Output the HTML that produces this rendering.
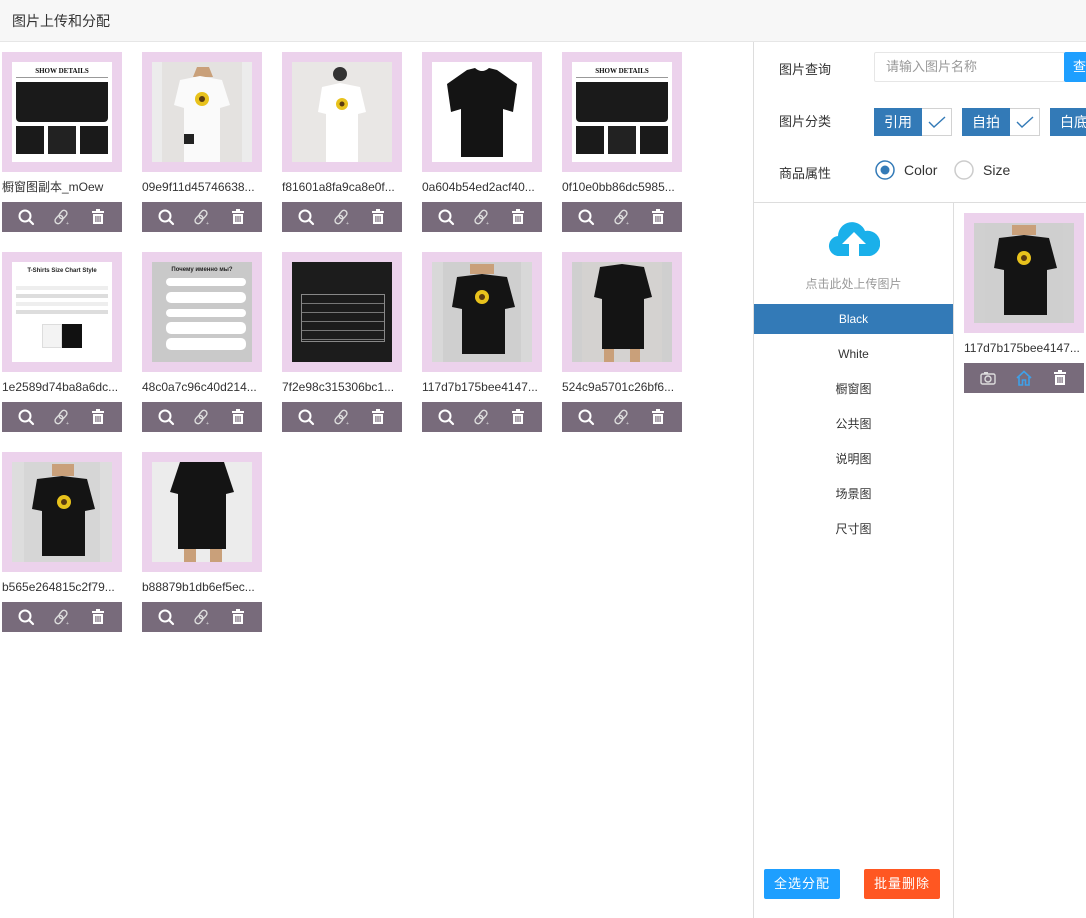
<!DOCTYPE html>
<html><head><meta charset="utf-8"><style>
*{margin:0;padding:0;box-sizing:border-box}
body{width:1086px;height:918px;background:#fff;font-family:"Liberation Sans","Noto Sans CJK SC",sans-serif;position:relative;overflow:hidden;color:#333}
.hdr{position:absolute;left:0;top:0;width:1086px;height:42px;background:#f7f7f7;border-bottom:1px solid #e6e6e6;font-size:14px;line-height:42px;padding-left:12px;color:#333}
.card{position:absolute;width:120px}
.frame{width:120px;height:120px;background:#ecd2ec;padding:10px}
.img{width:100px;height:100px;overflow:hidden;position:relative;background:#fff}
.cap{font-size:12px;color:#333;height:30px;line-height:30px;white-space:nowrap;overflow:hidden;text-overflow:ellipsis;padding-left:0}
.bar{height:30px;background:#786b7b;display:flex;justify-content:space-around;align-items:center;padding:0 6px}
.bar svg{width:18px;height:18px}
.vl{position:absolute;left:753px;top:42px;width:1px;height:876px;background:#ddd}
.lbl{position:absolute;left:779px;font-size:13px;color:#333}
.inp{position:absolute;left:874px;top:52px;width:191px;height:30px;border:1px solid #e6e6e6;border-radius:2px;font-size:13px;color:#999;line-height:28px;padding-left:11px}
.qbtn{position:absolute;left:1064px;top:52px;width:30px;height:30px;background:#1e9fff;color:#fff;font-size:13px;line-height:30px;padding-left:9px;border-radius:2px}
.cat{position:absolute;top:108px;height:28px;display:flex}
.cat .t{background:#337ab7;color:#fff;font-size:14px;line-height:28px;width:48px;text-align:center}
.cat .c{width:30px;border:1px solid #d2d2d2;border-left:none;display:flex;align-items:center;justify-content:center}
.hl{position:absolute;left:754px;top:202px;width:332px;height:1px;background:#ddd}
.vl2{position:absolute;left:953px;top:203px;width:1px;height:715px;background:#ddd}
.li{position:absolute;left:754px;width:199px;height:30px;line-height:30px;text-align:center;font-size:12px;color:#333}
.btn{position:absolute;top:869px;width:76px;height:30px;color:#fff;font-size:13px;line-height:30px;text-align:center;border-radius:2px;letter-spacing:1px}
</style></head><body>
<div class="hdr">图片上传和分配</div>

<svg width="0" height="0" style="position:absolute">
<defs>
<g id="srch"><circle cx="8" cy="8" r="5.5" fill="none" stroke="#fff" stroke-width="2"/><line x1="12" y1="12" x2="16" y2="16" stroke="#fff" stroke-width="2.2" stroke-linecap="round"/></g>
<g id="lnk" fill="none" stroke="#ddd" stroke-width="1.4"><rect x="7" y="2" width="6" height="9" rx="3" transform="rotate(40 10 6.5)"/><rect x="3" y="7" width="6" height="9" rx="3" transform="rotate(40 6 11.5)"/><text x="13" y="17" font-size="5" fill="#ddd" stroke="none">+</text></g>
<g id="del" fill="#fff"><rect x="3" y="3" width="12" height="2"/><rect x="7" y="1" width="4" height="2"/><path d="M4 6h10v10H4z"/><rect x="6.3" y="8" width="1.2" height="6" fill="#786b7b"/><rect x="8.4" y="8" width="1.2" height="6" fill="#786b7b"/><rect x="10.5" y="8" width="1.2" height="6" fill="#786b7b"/></g>
</defs></svg>

<!-- images templates inline -->
<div class="card" style="left:2px;top:52px"><div class="frame"><div class="img"><div style="font:bold 7px 'Liberation Serif',serif;text-align:center;margin-top:5px;color:#111">SHOW DETAILS</div><div style="position:absolute;left:4px;top:15px;width:92px;height:1px;background:#999"></div><div style="position:absolute;left:4px;top:20px;width:92px;height:40px;background:#1a1a1a;border-radius:0 0 4px 4px"></div><div style="position:absolute;left:4px;top:64px;width:28px;height:28px;background:#1a1a1a"></div><div style="position:absolute;left:36px;top:64px;width:28px;height:28px;background:#222"></div><div style="position:absolute;left:68px;top:64px;width:28px;height:28px;background:#1a1a1a"></div></div></div><div class="cap">橱窗图副本_mOew</div><div class="bar"><svg viewBox="0 0 18 18"><use href="#srch"/></svg><svg viewBox="0 0 18 18"><use href="#lnk"/></svg><svg viewBox="0 0 18 18"><use href="#del"/></svg></div></div>

<div class="card" style="left:142px;top:52px"><div class="frame"><div class="img" style="background:#ececec"><svg width="100" height="100"><rect x="10" y="0" width="80" height="100" fill="#e4e2e0"/><path d="M45 5h12l4 10h-20z" fill="#c9a07a"/><path d="M28 18l20-4 22 4 8 25-10 3v54H32V46l-10-3z" fill="#fafafa"/><circle cx="50" cy="37" r="7" fill="#e8c21c"/><circle cx="50" cy="37" r="3" fill="#5a3a10"/><rect x="32" y="72" width="10" height="10" fill="#222"/></svg></div></div><div class="cap">09e9f11d45746638...</div><div class="bar"><svg viewBox="0 0 18 18"><use href="#srch"/></svg><svg viewBox="0 0 18 18"><use href="#lnk"/></svg><svg viewBox="0 0 18 18"><use href="#del"/></svg></div></div>

<div class="card" style="left:282px;top:52px"><div class="frame"><div class="img" style="background:#eee"><svg width="100" height="100"><rect x="0" y="0" width="100" height="100" fill="#e9e7e5"/><circle cx="48" cy="12" r="7" fill="#333"/><path d="M30 25l18-4 20 4 6 25-8 2v48H34V52l-8-2z" fill="#fff"/><circle cx="50" cy="42" r="6" fill="#e8c21c"/><circle cx="50" cy="42" r="2.5" fill="#5a3a10"/></svg></div></div><div class="cap">f81601a8fa9ca8e0f...</div><div class="bar"><svg viewBox="0 0 18 18"><use href="#srch"/></svg><svg viewBox="0 0 18 18"><use href="#lnk"/></svg><svg viewBox="0 0 18 18"><use href="#del"/></svg></div></div>

<div class="card" style="left:422px;top:52px"><div class="frame"><div class="img"><svg width="100" height="100"><path d="M35 8l8-2q7 6 14 0l8 2 20 14-4 28-10-3v48H29V47l-10 3-4-28z" fill="#141414"/></svg></div></div><div class="cap">0a604b54ed2acf40...</div><div class="bar"><svg viewBox="0 0 18 18"><use href="#srch"/></svg><svg viewBox="0 0 18 18"><use href="#lnk"/></svg><svg viewBox="0 0 18 18"><use href="#del"/></svg></div></div>

<div class="card" style="left:562px;top:52px"><div class="frame"><div class="img"><div style="font:bold 7px 'Liberation Serif',serif;text-align:center;margin-top:5px;color:#111">SHOW DETAILS</div><div style="position:absolute;left:4px;top:15px;width:92px;height:1px;background:#999"></div><div style="position:absolute;left:4px;top:20px;width:92px;height:40px;background:#1a1a1a;border-radius:0 0 4px 4px"></div><div style="position:absolute;left:4px;top:64px;width:28px;height:28px;background:#1a1a1a"></div><div style="position:absolute;left:36px;top:64px;width:28px;height:28px;background:#222"></div><div style="position:absolute;left:68px;top:64px;width:28px;height:28px;background:#1a1a1a"></div></div></div><div class="cap">0f10e0bb86dc5985...</div><div class="bar"><svg viewBox="0 0 18 18"><use href="#srch"/></svg><svg viewBox="0 0 18 18"><use href="#lnk"/></svg><svg viewBox="0 0 18 18"><use href="#del"/></svg></div></div>

<!-- row 2 -->
<div class="card" style="left:2px;top:252px"><div class="frame"><div class="img"><div style="font:bold 6px sans-serif;text-align:center;margin-top:6px;color:#222">T-Shirts Size Chart Style</div><div style="position:absolute;left:4px;top:24px;width:92px;height:4px;background:#eee"></div><div style="position:absolute;left:4px;top:32px;width:92px;height:4px;background:#ddd"></div><div style="position:absolute;left:4px;top:40px;width:92px;height:4px;background:#eee"></div><div style="position:absolute;left:4px;top:48px;width:92px;height:4px;background:#ddd"></div><div style="position:absolute;left:30px;top:62px;width:20px;height:24px;background:#f3f3f3;border:1px solid #ddd"></div><div style="position:absolute;left:50px;top:62px;width:20px;height:24px;background:#111"></div></div></div><div class="cap">1e2589d74ba8a6dc...</div><div class="bar"><svg viewBox="0 0 18 18"><use href="#srch"/></svg><svg viewBox="0 0 18 18"><use href="#lnk"/></svg><svg viewBox="0 0 18 18"><use href="#del"/></svg></div></div>

<div class="card" style="left:142px;top:252px"><div class="frame"><div class="img" style="background:#c9c9c9"><div style="font:bold 6px sans-serif;text-align:center;margin-top:5px;color:#222">Почему именно мы?</div><div style="position:absolute;left:14px;top:16px;width:80px;height:8px;background:#fff;border-radius:4px"></div><div style="position:absolute;left:14px;top:30px;width:80px;height:11px;background:#fff;border-radius:5px"></div><div style="position:absolute;left:14px;top:47px;width:80px;height:8px;background:#fff;border-radius:4px"></div><div style="position:absolute;left:14px;top:60px;width:80px;height:12px;background:#fff;border-radius:5px"></div><div style="position:absolute;left:14px;top:76px;width:80px;height:12px;background:#fff;border-radius:5px"></div></div></div><div class="cap">48c0a7c96c40d214...</div><div class="bar"><svg viewBox="0 0 18 18"><use href="#srch"/></svg><svg viewBox="0 0 18 18"><use href="#lnk"/></svg><svg viewBox="0 0 18 18"><use href="#del"/></svg></div></div>

<div class="card" style="left:282px;top:252px"><div class="frame"><div class="img" style="background:#1c1c1c"><div style="position:absolute;left:9px;top:32px;width:84px;height:48px;border:1px solid #888;background:repeating-linear-gradient(#1c1c1c 0 8px,#777 8px 9px)"></div></div></div><div class="cap">7f2e98c315306bc1...</div><div class="bar"><svg viewBox="0 0 18 18"><use href="#srch"/></svg><svg viewBox="0 0 18 18"><use href="#lnk"/></svg><svg viewBox="0 0 18 18"><use href="#del"/></svg></div></div>

<div class="card" style="left:422px;top:252px"><div class="frame"><div class="img" style="background:#d8d8d8"><svg width="100" height="100"><rect x="11" y="0" width="78" height="100" fill="#cfcfcf"/><path d="M38 2h24v10H38z" fill="#c9a07a"/><path d="M25 15l25-3 25 3 8 30-10 2v45H30V47l-10-2z" fill="#141414"/><circle cx="50" cy="35" r="7" fill="#e8c21c"/><circle cx="50" cy="35" r="3" fill="#5a3a10"/></svg></div></div><div class="cap">117d7b175bee4147...</div><div class="bar"><svg viewBox="0 0 18 18"><use href="#srch"/></svg><svg viewBox="0 0 18 18"><use href="#lnk"/></svg><svg viewBox="0 0 18 18"><use href="#del"/></svg></div></div>

<div class="card" style="left:562px;top:252px"><div class="frame"><div class="img" style="background:#cfcfcf"><svg width="100" height="100"><rect x="10" y="0" width="80" height="100" fill="#d4d2d0"/><path d="M28 5l22-3 22 3 8 30-8 2v50H30V37l-8-2z" fill="#141414"/><rect x="32" y="87" width="10" height="13" fill="#c9a07a"/><rect x="58" y="87" width="10" height="13" fill="#c9a07a"/></svg></div></div><div class="cap">524c9a5701c26bf6...</div><div class="bar"><svg viewBox="0 0 18 18"><use href="#srch"/></svg><svg viewBox="0 0 18 18"><use href="#lnk"/></svg><svg viewBox="0 0 18 18"><use href="#del"/></svg></div></div>

<!-- row 3 -->
<div class="card" style="left:2px;top:452px"><div class="frame"><div class="img" style="background:#ddd"><svg width="100" height="100"><rect x="12" y="0" width="76" height="100" fill="#d6d6d6"/><path d="M40 2h22v12H40z" fill="#c9a07a"/><path d="M25 17l25-3 25 3 8 30-10 2v45H30V49l-10-2z" fill="#141414"/><circle cx="52" cy="40" r="7" fill="#e8c21c"/><circle cx="52" cy="40" r="3" fill="#5a3a10"/></svg></div></div><div class="cap">b565e264815c2f79...</div><div class="bar"><svg viewBox="0 0 18 18"><use href="#srch"/></svg><svg viewBox="0 0 18 18"><use href="#lnk"/></svg><svg viewBox="0 0 18 18"><use href="#del"/></svg></div></div>

<div class="card" style="left:142px;top:452px"><div class="frame"><div class="img" style="background:#ececec"><svg width="100" height="100"><path d="M28 0h44l10 30-8 2v55H26V32l-8-2z" fill="#141414"/><rect x="32" y="87" width="12" height="13" fill="#c9a07a"/><rect x="58" y="87" width="12" height="13" fill="#c9a07a"/></svg></div></div><div class="cap">b88879b1db6ef5ec...</div><div class="bar"><svg viewBox="0 0 18 18"><use href="#srch"/></svg><svg viewBox="0 0 18 18"><use href="#lnk"/></svg><svg viewBox="0 0 18 18"><use href="#del"/></svg></div></div>

<div class="vl"></div>
<div class="lbl" style="top:59px">图片查询</div>
<div class="inp">请输入图片名称</div>
<div class="qbtn">查</div>
<div class="lbl" style="top:111px">图片分类</div>
<div class="cat" style="left:874px"><div class="t">引用</div><div class="c"><svg width="18" height="12"><path d="M1 6l5 5 11-10" fill="none" stroke="#337ab7" stroke-width="1.4"/></svg></div></div>
<div class="cat" style="left:962px"><div class="t">自拍</div><div class="c"><svg width="18" height="12"><path d="M1 6l5 5 11-10" fill="none" stroke="#337ab7" stroke-width="1.4"/></svg></div></div>
<div class="cat" style="left:1050px"><div class="t">白底</div></div>
<div class="lbl" style="top:163px">商品属性</div>
<svg style="position:absolute;left:874px;top:159px" width="22" height="22"><circle cx="11" cy="11" r="9" fill="none" stroke="#337ab7" stroke-width="1.5"/><circle cx="11" cy="11" r="4.5" fill="#337ab7"/></svg>
<div style="position:absolute;left:904px;top:162px;font-size:14px;color:#333">Color</div>
<svg style="position:absolute;left:953px;top:159px" width="22" height="22"><circle cx="11" cy="11" r="9" fill="none" stroke="#ccc" stroke-width="1.5"/></svg>
<div style="position:absolute;left:983px;top:162px;font-size:14px;color:#333">Size</div>

<div class="hl"></div>
<div class="vl2"></div>
<svg style="position:absolute;left:828px;top:220px" width="52" height="38" viewBox="0 0 52 38"><path d="M12 36a10 10 0 0 1-2-20 14 14 0 0 1 27-5 11 11 0 0 1 5 25z" fill="#1ab0ea"/><path d="M26 12l-12 12h7v12h10V24h7z" fill="#fff"/></svg>
<div style="position:absolute;left:754px;top:275px;width:199px;text-align:center;font-size:12px;color:#999">点击此处上传图片</div>
<div class="li" style="top:304px;background:#337ab7;color:#fff">Black</div>
<div class="li" style="top:339px">White</div>
<div class="li" style="top:374px">橱窗图</div>
<div class="li" style="top:409px">公共图</div>
<div class="li" style="top:444px">说明图</div>
<div class="li" style="top:479px">场景图</div>
<div class="li" style="top:514px">尺寸图</div>
<div class="btn" style="left:764px;background:#1e9fff">全选分配</div>
<div class="btn" style="left:864px;background:#ff5722">批量删除</div>

<div class="card" style="left:964px;top:213px"><div class="frame"><div class="img" style="background:#d0d0d0"><svg width="100" height="100"><rect x="11" y="0" width="78" height="100" fill="#cfcfcf"/><path d="M38 2h24v10H38z" fill="#c9a07a"/><path d="M25 15l25-3 25 3 8 30-10 2v45H30V47l-10-2z" fill="#141414"/><circle cx="50" cy="35" r="7" fill="#e8c21c"/><circle cx="50" cy="35" r="3" fill="#5a3a10"/></svg></div></div><div class="cap">117d7b175bee4147...</div><div class="bar"><svg viewBox="0 0 18 18"><rect x="2" y="5" width="14" height="10" rx="1.5" fill="none" stroke="#ddd" stroke-width="1.4"/><rect x="5" y="3" width="4" height="2" fill="#ddd"/><circle cx="9" cy="10" r="3" fill="none" stroke="#ddd" stroke-width="1.4"/></svg><svg viewBox="0 0 18 18"><path d="M2 9L9 2.5 16 9M4 8v8h3.5v-5h3v5H14V8" fill="none" stroke="#3fa0e8" stroke-width="1.6"/></svg><svg viewBox="0 0 18 18"><use href="#del"/></svg></div></div>
</body></html>
